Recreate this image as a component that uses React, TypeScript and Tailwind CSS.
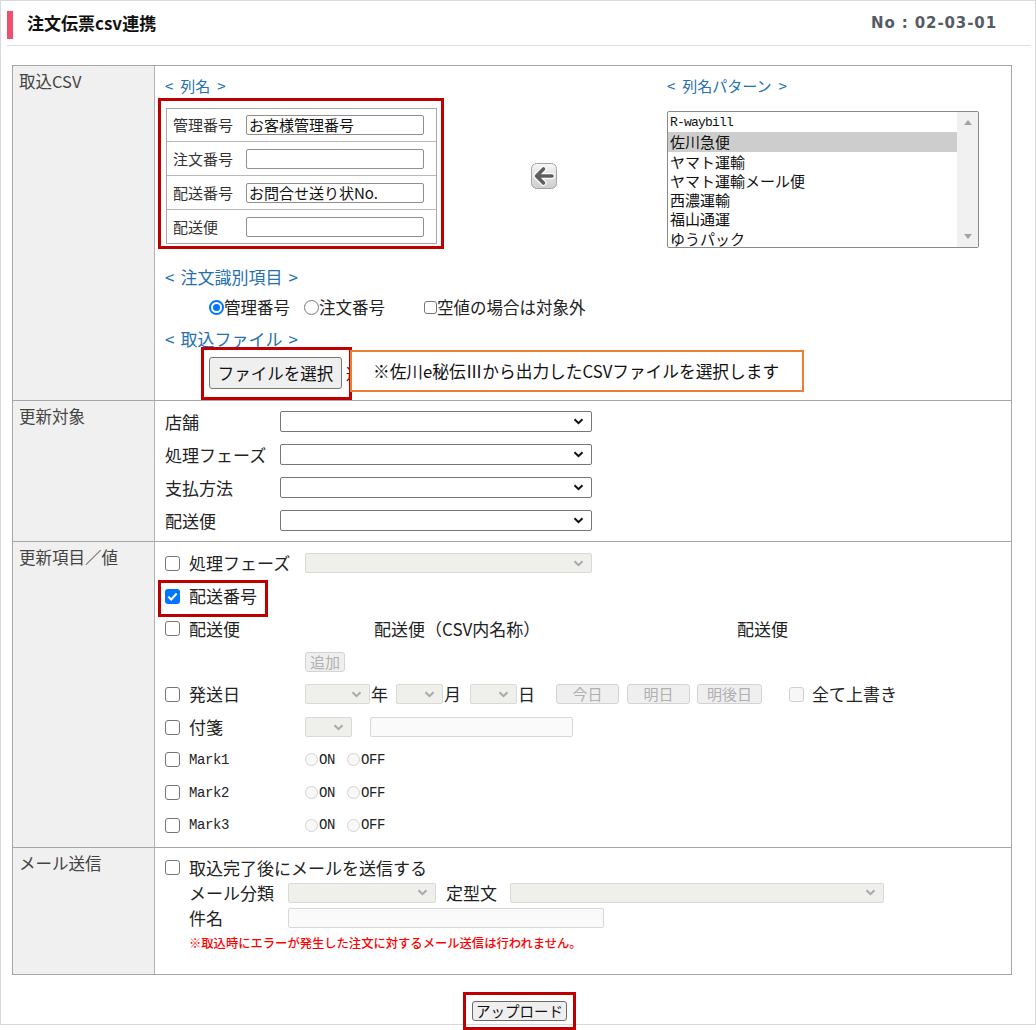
import React from 'react';

const MONO = "font-['Liberation_Mono','Noto_Sans_CJK_JP',monospace]";

function Chevron({ disabled }: { disabled?: boolean }) {
  return (
    <svg width="11" height="7" viewBox="0 0 11 7" className="shrink-0">
      <path d="M1.5 1.2l4 4 4-4" fill="none" stroke={disabled ? '#a9a9a9' : '#111'} strokeWidth="2" />
    </svg>
  );
}

function Select({ w, h = 'h-[21px]', disabled }: { w: string; h?: string; disabled?: boolean }) {
  return (
    <div
      className={`${w} ${h} shrink-0 flex items-center justify-end pr-[7px] rounded-[2px] border ${
        disabled ? 'bg-[#efefec] border-[#d9d9d6]' : 'bg-white border-[#767676]'
      }`}
    >
      <Chevron disabled={disabled} />
    </div>
  );
}

function Check({ checked, disabled, size = 'w-[15px] h-[15px]' }: { checked?: boolean; disabled?: boolean; size?: string }) {
  if (checked) {
    return (
      <span className={`${size} shrink-0 rounded-[3px] bg-[#0075ff] flex items-center justify-center`}>
        <svg width="11" height="9" viewBox="0 0 11 9">
          <path d="M1.3 4.6l2.9 2.9 5.5-6" fill="none" stroke="#fff" strokeWidth="2" />
        </svg>
      </span>
    );
  }
  return (
    <span
      className={`${size} block shrink-0 rounded-[3px] border ${
        disabled ? 'border-[#cfcfcf] bg-[#f7f7f7]' : 'border-[#767676] bg-white'
      }`}
    />
  );
}

function Radio({ checked, disabled }: { checked?: boolean; disabled?: boolean }) {
  if (checked) {
    return (
      <span className="w-[15px] h-[15px] shrink-0 rounded-full border-[2px] border-[#0075ff] flex items-center justify-center">
        <span className="block w-[7px] h-[7px] rounded-full bg-[#0075ff]" />
      </span>
    );
  }
  if (disabled) {
    return <span className="block w-[13px] h-[13px] shrink-0 rounded-full border border-[#d2d2d2] bg-[#f8f8f8]" />;
  }
  return <span className="block w-[15px] h-[15px] shrink-0 rounded-full border border-[#767676] bg-white" />;
}

function DisabledButton({ w, label }: { w: string; label: string }) {
  return (
    <div
      className={`${w} h-[20px] shrink-0 flex items-center justify-center rounded-[3px] border border-[#d3d3d3] bg-[#efefef] text-[15px] leading-[18px] text-[#b0b0b0]`}
    >
      {label}
    </div>
  );
}

function Heading({ text, size, gap }: { text: string; size: string; gap: string }) {
  return (
    <div className={`flex items-center ${size} text-[#2670b0]`}>
      <span>&lt;</span>
      <span className={gap}>{text}</span>
      <span>&gt;</span>
    </div>
  );
}

const columnRows = [
  { label: '管理番号', value: 'お客様管理番号' },
  { label: '注文番号', value: '' },
  { label: '配送番号', value: 'お問合せ送り状No.' },
  { label: '配送便', value: '' },
];

const patterns = ['佐川急便', 'ヤマト運輸', 'ヤマト運輸メール便', '西濃運輸', '福山通運', 'ゆうパック'];

const targets = ['店舗', '処理フェーズ', '支払方法', '配送便'];

const labelCell =
  'bg-[#f0f0f0] border-r border-[#b3b3b3] pl-[6px] pt-[4px] text-[16.5px] leading-[22px] text-[#444]';

export default function App() {
  return (
    <div className="w-[1036px] h-[1030px] bg-white text-[#222] font-['Noto_Sans_CJK_JP','Noto_Sans',sans-serif]">
      <div className="h-[1025px] border border-[#d9d9d9]">
        {/* header */}
        <div className="ml-[6px] mr-[4px] h-[45px] border-b border-[#e0e0e0] flex items-start justify-between">
          <div className="flex items-start">
            <span className="mt-[10px] w-[6px] h-[28px] bg-[#f0506e]" />
            <span className="mt-[11px] ml-[14px] text-[17px] font-bold leading-[22px] text-[#111]">注文伝票csv連携</span>
          </div>
          <span className="mt-[12px] mr-[34px] font-['DejaVu_Sans',sans-serif] text-[15px] font-bold leading-[20px] text-[#555b66] tracking-[0.9px]">
            No : 02-03-01
          </span>
        </div>

        {/* main table */}
        <div className="mt-[19px] ml-[11px] w-[1000px] border border-[#a6a6a6]">
          {/* 取込CSV */}
          <div className="grid grid-cols-[142px_1fr] h-[334px]">
            <div className={labelCell}>取込CSV</div>
            <div className="pt-[10px]">
              <div className="flex items-start">
                <div className="w-[289px] pl-[3px]">
                  <div className="ml-[7px] h-[20px] leading-[20px]">
                    <Heading text="列名" size="text-[15px]" gap="mx-[7px]" />
                  </div>
                  <div className="mt-[2px] w-[286px] h-[151px] border-[3px] border-[#c00000] pl-[5px] pt-[7px]">
                    <div className="w-[271px] border border-[#a8a8a8]">
                      {columnRows.map((r, i) => (
                        <div
                          key={r.label}
                          className={`flex items-center ${i === 0 ? 'h-[32px]' : 'h-[34px] border-t border-[#b8b8b8]'}`}
                        >
                          <span className="w-[79px] pl-[6px] text-[15px] leading-[20px] text-[#333]">{r.label}</span>
                          <div className="w-[178px] h-[20px] border border-[#8f8f8f] rounded-[2px] pl-[2px] text-[15px] leading-[18px] text-[#111] whitespace-nowrap overflow-hidden">
                            {r.value}
                          </div>
                        </div>
                      ))}
                    </div>
                  </div>
                </div>

                <div className="ml-[87px] mt-[87px] shrink-0">
                  <svg width="26" height="26" viewBox="0 0 26 26">
                    <defs>
                      <linearGradient id="arrowBg" x1="0" y1="0" x2="0" y2="1">
                        <stop offset="0" stopColor="#f6f6f6" />
                        <stop offset="1" stopColor="#cdcdcd" />
                      </linearGradient>
                    </defs>
                    <rect x="0.5" y="0.5" width="25" height="25" rx="5" fill="url(#arrowBg)" stroke="#a5a5a5" />
                    <path
                      d="M12.5 6L5.5 13l7 7M6 13H21"
                      fill="none"
                      stroke="#fff"
                      strokeWidth="6"
                      strokeLinecap="round"
                      strokeLinejoin="round"
                    />
                    <path
                      d="M12.5 6L5.5 13l7 7M6 13H21"
                      fill="none"
                      stroke="#5e5e5e"
                      strokeWidth="3.6"
                      strokeLinecap="round"
                      strokeLinejoin="round"
                    />
                  </svg>
                </div>

                <div className="ml-[110px]">
                  <div className="h-[20px] leading-[20px]">
                    <Heading text="列名パターン" size="text-[15px]" gap="mx-[7px]" />
                  </div>
                  <div className="mt-[15px] w-[312px] h-[137px] border border-[#8a8a8a] rounded-[2px] flex overflow-hidden">
                    <div className="flex-1 pt-[1px] text-[15px] leading-[19.3px] text-[#111]">
                      <div className={`h-[19.3px] pl-[2px] ${MONO} text-[13px] tracking-[-0.8px]`}>R-waybill</div>
                      {patterns.map((p, i) => (
                        <div key={p} className={`h-[19.3px] pl-[2px] whitespace-nowrap ${i === 0 ? 'bg-[#cdcdcd]' : ''}`}>
                          {p}
                        </div>
                      ))}
                    </div>
                    <div className="w-[21px] bg-[#f1f1f1] flex flex-col items-center justify-between py-[8px]">
                      <svg width="8" height="5" viewBox="0 0 8 5">
                        <path d="M0 5L4 0l4 5z" fill="#a3a3a3" />
                      </svg>
                      <svg width="8" height="5" viewBox="0 0 8 5">
                        <path d="M0 0l4 5 4-5z" fill="#a3a3a3" />
                      </svg>
                    </div>
                  </div>
                </div>
              </div>

              <div className="mt-[17px] ml-[10px] h-[22px] leading-[22px]">
                <Heading text="注文識別項目" size="text-[17px]" gap="mx-[6px]" />
              </div>
              <div className="mt-[8px] ml-[54px] h-[22px] flex items-center text-[16.5px] leading-[22px] text-[#222]">
                <Radio checked />
                <span>管理番号</span>
                <span className="ml-[14px]">
                  <Radio />
                </span>
                <span>注文番号</span>
                <span className="ml-[39px]">
                  <Check size="w-[13px] h-[13px]" />
                </span>
                <span>空値の場合は対象外</span>
              </div>

              <div className="mt-[10px] ml-[10px] h-[22px] leading-[22px]">
                <Heading text="取込ファイル" size="text-[17px]" gap="mx-[6px]" />
              </div>
              <div className="mt-[-3px] ml-[46px] flex items-start">
                <div className="w-[151px] h-[53px] border-[3px] border-[#c00000] pl-[5px] pt-[7px] flex items-start overflow-hidden whitespace-nowrap">
                  <div className="w-[133px] h-[32px] shrink-0 flex items-center justify-center border border-[#767676] rounded-[3px] bg-[#efefef] text-[16.5px] leading-[22px] text-[#111]">
                    ファイルを選択
                  </div>
                  <span className="ml-[4px] mt-[5px] text-[16px] leading-[22px]">選択されていません</span>
                </div>
                <div className="relative z-10 -ml-[2px] mt-[3px] w-[454px] h-[42px] border-2 border-[#ed7d31] bg-white flex items-center pl-[21px] text-[16.7px] leading-[22px] text-[#111] whitespace-nowrap">
                  ※佐川e秘伝Ⅲから出力したCSVファイルを選択します
                </div>
              </div>
            </div>
          </div>

          {/* 更新対象 */}
          <div className="grid grid-cols-[142px_1fr] h-[141px] border-t border-[#a6a6a6]">
            <div className={labelCell}>更新対象</div>
            <div className="pt-[10px] flex flex-col gap-[12px]">
              {targets.map((t) => (
                <div key={t} className="h-[21px] flex items-center">
                  <span className="ml-[10px] w-[115px] text-[17px] leading-[22px] text-[#222]">{t}</span>
                  <Select w="w-[312px]" />
                </div>
              ))}
            </div>
          </div>

          {/* 更新項目／値 */}
          <div className="grid grid-cols-[142px_1fr] h-[306px] border-t border-[#a6a6a6]">
            <div className={labelCell}>更新項目／値</div>
            <div className="pt-[5px] text-[17px] leading-[22px] text-[#222]">
              <div className="h-[32.75px] flex items-center">
                <div className="w-[150px] flex items-center pl-[10px]">
                  <Check />
                  <span className="ml-[9px]">処理フェーズ</span>
                </div>
                <Select w="w-[287px]" h="h-[20px]" disabled />
              </div>

              <div className="relative h-[32.75px] flex items-center">
                <div className="w-[150px] flex items-center pl-[10px]">
                  <Check checked />
                  <span className="ml-[9px]">配送番号</span>
                </div>
                <span className="absolute left-[3px] top-0 w-[110px] h-[37px] border-[3px] border-[#c00000]" />
              </div>

              <div className="h-[32.75px] flex items-center">
                <div className="w-[150px] flex items-center pl-[10px]">
                  <Check />
                  <span className="ml-[9px]">配送便</span>
                </div>
                <span className="ml-[69px] w-[363px]">配送便（CSV内名称）</span>
                <span>配送便</span>
              </div>

              <div className="h-[32.75px] flex items-center">
                <div className="w-[150px]" />
                <DisabledButton w="w-[40px]" label="追加" />
              </div>

              <div className="h-[32.75px] flex items-center">
                <div className="w-[150px] flex items-center pl-[10px]">
                  <Check />
                  <span className="ml-[9px]">発送日</span>
                </div>
                <Select w="w-[65px]" h="h-[20px]" disabled />
                <span className="ml-[1px]">年</span>
                <span className="ml-[8px]">
                  <Select w="w-[47px]" h="h-[20px]" disabled />
                </span>
                <span className="ml-[1px]">月</span>
                <span className="ml-[9px]">
                  <Select w="w-[47px]" h="h-[20px]" disabled />
                </span>
                <span className="ml-[1px]">日</span>
                <span className="ml-[21px]">
                  <DisabledButton w="w-[63px]" label="今日" />
                </span>
                <span className="ml-[8px]">
                  <DisabledButton w="w-[63px]" label="明日" />
                </span>
                <span className="ml-[7px]">
                  <DisabledButton w="w-[65px]" label="明後日" />
                </span>
                <span className="ml-[27px]">
                  <Check disabled />
                </span>
                <span className="ml-[8px]">全て上書き</span>
              </div>

              <div className="h-[32.75px] flex items-center">
                <div className="w-[150px] flex items-center pl-[10px]">
                  <Check />
                  <span className="ml-[9px]">付箋</span>
                </div>
                <Select w="w-[47px]" h="h-[20px]" disabled />
                <div className="ml-[18px] w-[203px] h-[20px] border border-[#d8d8d8] bg-[#fafafa] rounded-[2px]" />
              </div>

              {['Mark1', 'Mark2', 'Mark3'].map((m) => (
                <div key={m} className="h-[32.75px] flex items-center">
                  <div className="w-[150px] flex items-center pl-[10px]">
                    <Check />
                    <span className={`ml-[9px] ${MONO} text-[14px] tracking-[-0.4px]`}>{m}</span>
                  </div>
                  <Radio disabled />
                  <span className={`ml-[1px] ${MONO} text-[14px] tracking-[-0.4px]`}>ON</span>
                  <span className="ml-[12px]">
                    <Radio disabled />
                  </span>
                  <span className={`ml-[1px] ${MONO} text-[14px] tracking-[-0.4px]`}>OFF</span>
                </div>
              ))}
            </div>
          </div>

          {/* メール送信 */}
          <div className="grid grid-cols-[142px_1fr] h-[127px] border-t border-[#a6a6a6]">
            <div className={labelCell}>メール送信</div>
            <div className="pt-[7px] text-[17px] leading-[22px] text-[#222]">
              <div className="h-[25px] flex items-center pl-[10px]">
                <Check />
                <span className="ml-[9px]">取込完了後にメールを送信する</span>
              </div>
              <div className="h-[25px] flex items-center pl-[34px]">
                <span className="w-[99px]">メール分類</span>
                <Select w="w-[148px]" h="h-[20px]" disabled />
                <span className="ml-[10px] w-[64px]">定型文</span>
                <Select w="w-[374px]" h="h-[20px]" disabled />
              </div>
              <div className="h-[25px] flex items-center pl-[34px]">
                <span className="w-[99px]">件名</span>
                <div className="w-[316px] h-[20px] border border-[#d8d8d8] bg-[#fafafa] rounded-[2px]" />
              </div>
              <div className="h-[25px] flex items-center pl-[34px] text-[12.3px] font-medium text-[#ff0000]">
                ※取込時にエラーが発生した注文に対するメール送信は行われません。
              </div>
            </div>
          </div>
        </div>

        {/* upload */}
        <div className="mt-[17px] ml-[462px] w-[113px] h-[38px] border-[3px] border-[#c00000] pl-[6px] pt-[6px]">
          <div className="w-[95px] h-[20px] flex items-center justify-center border border-[#6b6b6b] rounded-[3px] bg-[#efefef] text-[14.5px] leading-[18px] text-[#111]">
            アップロード
          </div>
        </div>
      </div>
    </div>
  );
}
